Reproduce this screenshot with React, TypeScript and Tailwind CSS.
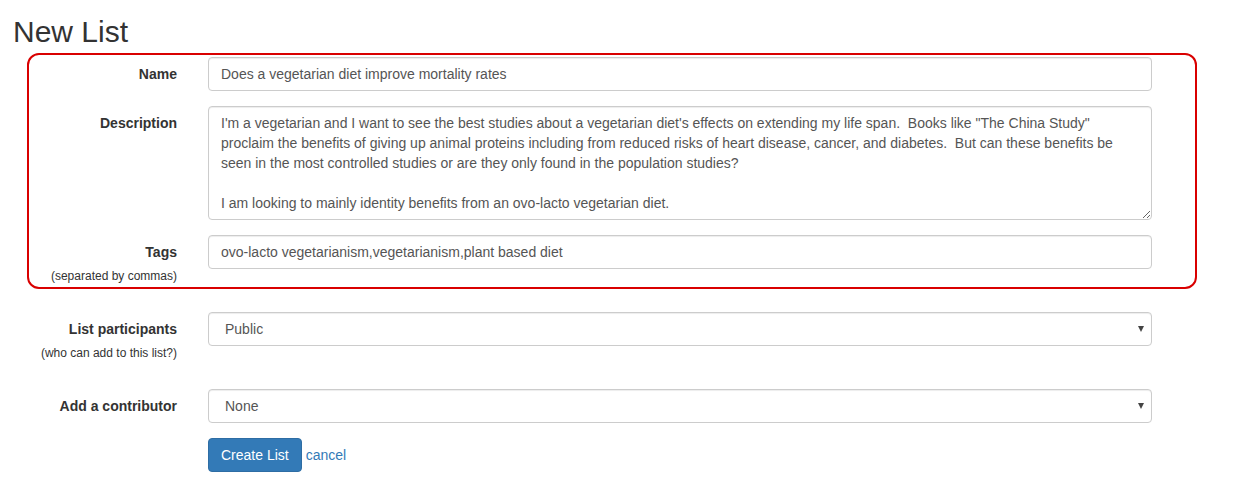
import React from "react";

const desc =
  'I\'m a vegetarian and I want to see the best studies about a vegetarian diet\'s effects on extending my life span.  Books like "The China Study" proclaim the benefits of giving up animal proteins including from reduced risks of heart disease, cancer, and diabetes.  But can these benefits be seen in the most controlled studies or are they only found in the population studies?\n\nI am looking to mainly identity benefits from an ovo-lacto vegetarian diet.';

const inputCls =
  "block w-[944px] h-[34px] px-3 py-[6px] text-[14px] leading-5 text-[#555] bg-white border border-[#ccc] rounded-[4px] shadow-[inset_0_1px_1px_rgba(0,0,0,0.075)] outline-none";

function Row({
  label,
  help,
  children,
  className = "",
}: {
  label: string;
  help?: string;
  children: React.ReactNode;
  className?: string;
}) {
  return (
    <div className={`flex items-start gap-[31px] ${className}`}>
      <div className="w-[148px] shrink-0 text-right">
        <div className="pt-[7px] leading-5 font-bold">{label}</div>
        {help && <div className="mt-[6px] text-[12px] leading-[17px]">{help}</div>}
      </div>
      {children}
    </div>
  );
}

function Select({ value }: { value: string }) {
  return (
    <div className="relative w-[944px]">
      <select
        defaultValue={value}
        className={`${inputCls} appearance-none pl-4`}
      >
        <option>{value}</option>
      </select>
      {/* arrow */}
      <span className="pointer-events-none absolute right-[8px] top-[14px] w-0 h-0 border-l-[3.5px] border-r-[3.5px] border-t-[6px] border-l-transparent border-r-transparent border-t-[#444]" />
    </div>
  );
}

export default function App() {
  return (
    <div
      className="bg-white min-h-[495px] text-[14px] leading-5 text-[#333]"
      style={{ fontFamily: '"Liberation Sans", Arial, sans-serif' }}
    >
      <h1 className="pl-[13px] pt-[15px] text-[30px] leading-[33px] font-normal">New List</h1>

      {/* highlighted block */}
      <div className="ml-[27px] mt-[5px] w-[1170px] border-2 border-[#d90000] rounded-[12px] pt-[2px] pb-[2px]">
        <Row label="Name" className="mb-[15px]">
          <input className={inputCls} defaultValue="Does a vegetarian diet improve mortality rates" />
        </Row>
        <Row label="Description" className="mb-[15px]">
          <textarea
            defaultValue={desc}
            className={`${inputCls} h-[114px] resize-y`}
          />
        </Row>
        <Row label="Tags" help="(separated by commas)">
          <input
            className={inputCls}
            defaultValue="ovo-lacto vegetarianism,vegetarianism,plant based diet"
          />
        </Row>
      </div>

      <div className="ml-[29px] mt-[23px]">
        <Row label="List participants" help="(who can add to this list?)" className="mb-[27px]">
          <Select value="Public" />
        </Row>
        <Row label="Add a contributor" className="mb-[15px]">
          <Select value="None" />
        </Row>
        <div className="pl-[179px] flex items-center gap-1">
          <button className="h-[34px] px-3 py-[6px] text-white bg-[#337ab7] border border-[#2e6da4] rounded-[4px]">
            Create List
          </button>
          <a href="#" className="text-[#337ab7]">
            cancel
          </a>
        </div>
      </div>
    </div>
  );
}
